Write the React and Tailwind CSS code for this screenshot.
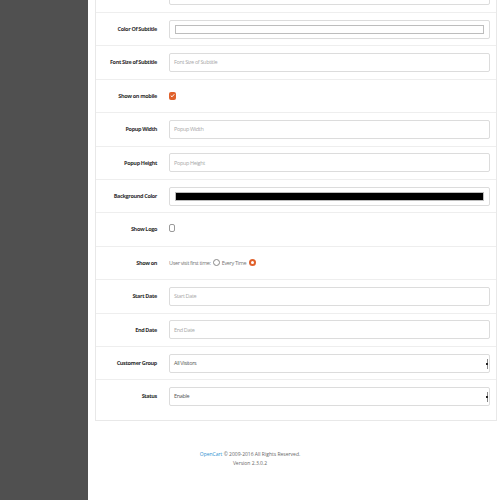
const font = { fontFamily: '"Open Sans", "Liberation Sans", sans-serif' };

function Label({ children }) {
  return (
    <div className="w-[62px] shrink-0 pr-[1px] text-right text-[5.5px] font-bold text-[#333] tracking-[-0.35px]">
      {children}
    </div>
  );
}

function Row({ label, children }) {
  return (
    <div className="flex h-[33.4px] items-center border-t border-[#eeeeee]">
      <Label>{label}</Label>
      <div className="ml-[11px] mr-[6px] flex flex-1 items-center">{children}</div>
    </div>
  );
}

function TextInput({ placeholder }) {
  return (
    <div className="flex h-[19px] w-full items-center rounded-[2px] border border-[#dcdcdc] bg-white px-[4px] text-[5.5px] text-[#a8a8a8] tracking-[-0.35px]">
      {placeholder}
    </div>
  );
}

function ColorInput({ color }) {
  return (
    <div className="flex h-[19px] w-full items-center rounded-[2px] border border-[#dcdcdc] bg-white px-[5px]">
      <div className={`h-[9px] w-full border border-[#bdbdbd] ${color}`} />
    </div>
  );
}

function Select({ value }) {
  return (
    <div className="relative flex h-[19px] w-full items-center rounded-[2px] border border-[#dcdcdc] bg-white px-[4px] text-[5.5px] text-[#555] tracking-[-0.35px]">
      {value}
      <div className="absolute right-[1px] top-[4px] flex h-[10px] w-[2px] flex-col items-center justify-center border-r border-[#888]">
        <div className="h-[2px] w-[2px] bg-[#222]" />
      </div>
    </div>
  );
}

function Checkbox({ checked }) {
  if (checked) {
    return (
      <div className="flex h-[8px] w-[7px] items-center justify-center rounded-[2px] bg-[#e0612c]">
        <svg width="5" height="5" viewBox="0 0 10 10">
          <path d="M1.5 5.2 L4 7.6 L8.5 2.5" stroke="white" strokeWidth="2" fill="none" />
        </svg>
      </div>
    );
  }
  return <div className="h-[8px] w-[6px] rounded-[2px] border border-[#9a9a9a] bg-white" />;
}

export default function App() {
  return (
    <div className="flex h-[500px] w-[500px] overflow-hidden bg-white" style={font}>
      <div className="h-full w-[88px] shrink-0 bg-[#505050]" />
      <div className="flex flex-1 flex-col">
        <div className="-mt-[21.4px] ml-[7px] mr-[3px] border-x border-b border-[#e8e8e8] bg-white pb-[7px]">
          <div className="flex h-[33.4px] items-center">
            <div className="w-[62px]" />
            <div className="ml-[11px] mr-[6px] flex flex-1">
              <TextInput placeholder="" />
            </div>
          </div>
          <Row label="Color Of Subtitle">
            <ColorInput color="bg-white" />
          </Row>
          <Row label="Font Size of Subtitle">
            <TextInput placeholder="Font Size of Subtitle" />
          </Row>
          <Row label="Show on mobile">
            <Checkbox checked />
          </Row>
          <Row label="Popup Width">
            <TextInput placeholder="Popup Width" />
          </Row>
          <Row label="Popup Height">
            <TextInput placeholder="Popup Height" />
          </Row>
          <Row label="Background Color">
            <ColorInput color="bg-black" />
          </Row>
          <Row label="Show Logo">
            <div className="-mt-[3px]">
              <Checkbox />
            </div>
          </Row>
          <Row label="Show on">
            <div className="flex items-center gap-[1px] text-[5.5px] text-[#777] tracking-[-0.35px]">
              <span>User visit first time:</span>
              <span className="ml-[1px] h-[7px] w-[7px] rounded-full border border-[#888] bg-white" />
              <span className="ml-[1px]">Every Time</span>
              <span className="ml-[2px] flex h-[7px] w-[7px] items-center justify-center rounded-full bg-[#e0612c]">
                <span className="h-[3px] w-[3px] rounded-full bg-white" />
              </span>
            </div>
          </Row>
          <Row label="Start Date">
            <TextInput placeholder="Start Date" />
          </Row>
          <Row label="End Date">
            <TextInput placeholder="End Date" />
          </Row>
          <Row label="Customer Group">
            <Select value="All Visitors" />
          </Row>
          <Row label="Status">
            <Select value="Enable" />
          </Row>
        </div>
        <div className="mt-[29px] -ml-[88px] text-center text-[5px] leading-[9px] text-[#666]">
          <div>
            <span className="text-[#2a8fd0]">OpenCart</span> © 2009-2016 All Rights Reserved.
          </div>
          <div>Version 2.3.0.2</div>
        </div>
      </div>
    </div>
  );
}
